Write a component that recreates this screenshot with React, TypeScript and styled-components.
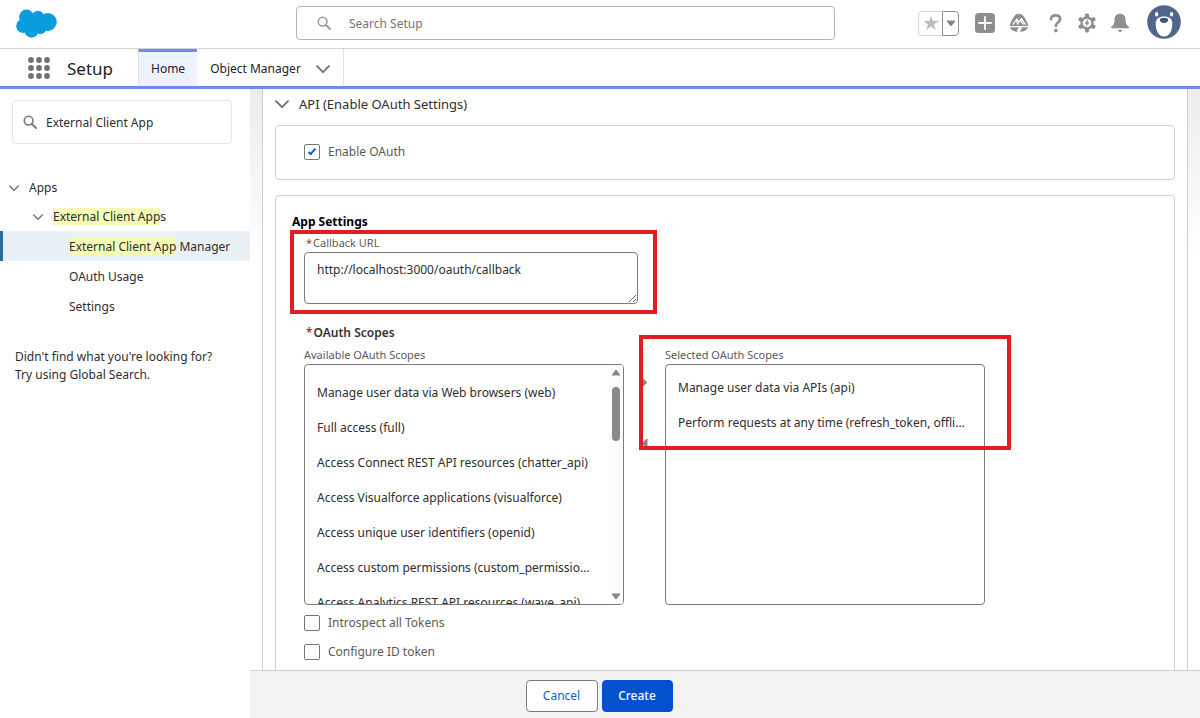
import React, { useState } from "react";
import styled, { createGlobalStyle, css } from "styled-components";

const GlobalStyle = createGlobalStyle`
  *, *::before, *::after { box-sizing: border-box; }
  body {
    margin: 0;
    background: #fff;
    color: #2e2e2e;
    font-family: "Noto Sans", "Open Sans", sans-serif;
    font-size: 12px;
    line-height: 18px;
  }
  button, input, textarea { font: inherit; color: inherit; }
  ul { list-style: none; margin: 0; padding: 0; }
  h1, h2, h3 { margin: 0; font-weight: 400; }
  svg { display: block; flex: none; }
`;

const Page = styled.div`
  display: flex;
  flex-direction: column;
  height: 100vh;
`;

/* ---------- global header ---------- */

const Header = styled.header`
  display: flex;
  align-items: center;
  flex: none;
  height: 49px;
  padding-right: 17px;
  padding-bottom: 2px;
  border-bottom: 1px solid #d4d4d4;
`;

const Brand = styled.a`
  flex: 0 0 296px;
  padding-left: 16px;
`;

const GlobalSearch = styled.label`
  display: flex;
  align-items: center;
  flex: 1;
  gap: 18px;
  height: 34px;
  margin-right: 83px;
  padding-left: 20px;
  border: 1px solid #b4b4b4;
  border-radius: 4px;
  color: #9a9a9a;
`;

const BareInput = styled.input`
  flex: 1;
  min-width: 0;
  padding: 2px 0 0;
  border: 0;
  outline: 0;
  background: none;
  &::placeholder { color: #757575; opacity: 1; }
`;

const Actions = styled.div`
  display: flex;
  align-items: center;
  gap: 14px;
`;

const SplitButton = styled.div`
  display: flex;
  margin-right: 2px;
`;

const SplitPart = styled.button<{ $strong?: boolean }>`
  display: grid;
  place-items: center;
  width: ${(p) => (p.$strong ? 17 : 24)}px;
  height: 25px;
  padding: 0;
  background: #fff;
  border: 1px solid ${(p) => (p.$strong ? "#8f8f8f" : "#d9d9d9")};
  border-radius: ${(p) => (p.$strong ? "0 4px 4px 0" : "4px 0 0 4px")};
  ${(p) => !p.$strong && css`border-right: 0;`}
`;

const IconButton = styled.button<{ $size?: number }>`
  display: grid;
  place-items: center;
  width: ${(p) => p.$size ?? 20}px;
  height: ${(p) => p.$size ?? 20}px;
  padding: 0;
  border: 0;
  background: none;
  color: #8e8e8e;
`;

/* ---------- navigation bar ---------- */

const NavBar = styled.nav`
  display: flex;
  align-items: stretch;
  flex: none;
  height: 40px;
  border-bottom: 3px solid #7389e9;
`;

const Launcher = styled.button`
  display: grid;
  place-items: center;
  width: 22px;
  margin: 0 17px 0 28px;
  padding: 0;
  border: 0;
  background: none;
`;

const AppName = styled.h1`
  width: 71px;
  font-size: 17px;
  line-height: 39px;
  color: #222;
`;

const Tab = styled.a<{ $active?: boolean }>`
  display: flex;
  align-items: center;
  gap: 15px;
  padding: 3px 13px 0;
  color: #222;
  text-decoration: none;
  border-right: 1px solid #e2e2e2;
  ${(p) =>
    p.$active &&
    css`
      padding: 0 12px;
      background: #eef1fe;
      border-top: 3px solid #7389e9;
      border-left: 1px solid #dfe1ec;
      border-right: 0;
    `}
`;

/* ---------- sidebar ---------- */

const Body = styled.div`
  display: flex;
  flex: 1;
  min-height: 0;
`;

const Sidebar = styled.aside`
  flex: 0 0 250px;
  padding-top: 11px;
`;

const QuickFind = styled.label`
  display: flex;
  align-items: center;
  gap: 9px;
  height: 44px;
  margin: 0 18px 29px 12px;
  padding-left: 10px;
  border: 1px solid #e4e4e4;
  border-radius: 4px;
  color: #747474;
  ${BareInput} { color: #2e2e2e; }
`;

const TreeItem = styled.a<{ $level: 0 | 1 | 2; $active?: boolean }>`
  display: flex;
  align-items: center;
  gap: 10px;
  height: ${(p) => (p.$level === 2 ? 30 : 29)}px;
  padding-top: ${(p) => (p.$level === 2 ? 2 : 0)}px;
  padding-left: ${(p) => [9, 33, 69][p.$level]}px;
  color: #2e2e2e;
  text-decoration: none;
  ${(p) =>
    p.$active &&
    css`
      background: #e9f0f6;
      box-shadow: inset 3px 0 #2b6c9c;
    `}
`;

const Match = styled.mark`
  color: inherit;
  background: #f5fbb4;
`;

const Hint = styled.p`
  margin: 27px 15px 0;
`;

/* ---------- main content ---------- */

const Main = styled.main`
  display: flex;
  flex-direction: column;
  flex: 1;
  min-width: 0;
  background: linear-gradient(#ececec, #fff 170px);
`;

const Sheet = styled.section`
  flex: 1;
  min-height: 0;
  overflow: hidden auto;
  scrollbar-width: none;
  margin: 0 12px;
  padding: 0 12px;
  background: #fff;
  border: solid #cfcfcf;
  border-width: 0 1px;
`;

const SectionTitle = styled.h2`
  display: flex;
  align-items: center;
  gap: 10px;
  height: 30px;
  margin-bottom: 6px;
  font-size: 13px;
`;

const Panel = styled.div`
  margin-bottom: 15px;
  padding: 17px 28px 18px;
  border: 1px solid #cfcfcf;
  border-radius: 4px;
`;

const PanelTitle = styled.h3`
  margin-left: -12px;
  font-size: 12px;
  font-weight: 700;
  color: #000;
`;

const Check = styled.label`
  display: flex;
  align-items: center;
  gap: 8px;
  color: #5a5a5a;
`;

const Box = styled.input`
  appearance: none;
  display: grid;
  place-items: center;
  width: 16px;
  height: 16px;
  margin: 0;
  background: #fff;
  border: 1px solid #757575;
  border-radius: 2px;
  &:checked::before {
    content: "";
    width: 8px;
    height: 4px;
    margin-bottom: 2px;
    border: solid #0b5cd5;
    border-width: 0 0 2px 2px;
    transform: rotate(-48deg);
  }
`;

const Caption = styled.label<{ $strong?: boolean }>`
  display: block;
  font-weight: ${(p) => (p.$strong ? 600 : 400)};
  color: ${(p) => (p.$strong ? "#333" : "#5a5a5a")};
  font-size: ${(p) => (p.$strong ? 12 : 11)}px;
`;

const Required = styled.span`
  margin: 0 1px 0 2px;
  color: #c8232c;
`;

const Field = styled.div`
  position: relative;
  width: 334px;
  margin: 3px 0 20px;
`;

const TextArea = styled.textarea`
  display: block;
  width: 100%;
  height: 52px;
  padding: 8px 12px;
  border: 1px solid #7c7c7c;
  border-radius: 4px;
  outline: 0;
  background: #fff;
  resize: vertical;
`;

/* Red rectangle laid over the fields it calls attention to. */
const Highlight = styled.div<{ $inset: string }>`
  position: absolute;
  inset: ${(p) => p.$inset};
  border: 4px solid #e21b25;
  pointer-events: none;
`;

const Duel = styled.div`
  display: flex;
  margin: 4px 0 9px;
`;

const Column = styled.div`
  position: relative;
  flex: 0 0 320px;
  min-width: 0;
`;

const ListBox = styled.div`
  display: flex;
  height: 241px;
  border: 1px solid #7c7c7c;
  border-radius: 4px;
  overflow: hidden;
`;

const Options = styled.ul<{ $top: number }>`
  flex: 1;
  min-width: 0;
  overflow: hidden;
  padding: ${(p) => p.$top}px 14px 0 12px;
`;

const Option = styled.li`
  line-height: 35px;
  white-space: nowrap;
  overflow: hidden;
  text-overflow: ellipsis;
`;

const ScrollTrack = styled.div`
  display: flex;
  flex-direction: column;
  align-items: center;
  width: 14px;
  padding: 4px 0;
  background: #fcfcfc;
`;

const ScrollThumb = styled.div`
  width: 8px;
  height: 54px;
  margin: 11px 0 auto;
  border-radius: 4px;
  background: #8a8a8a;
`;

const Movers = styled.div`
  display: flex;
  flex-direction: column;
  gap: 50px;
  flex: 0 0 41px;
  padding: 31px 0 0 17px;
`;

const Mover = styled.button`
  width: 8px;
  height: 11px;
  padding: 0;
  border: 0;
  background: none;
`;

const Checks = styled.div`
  display: flex;
  flex-direction: column;
  gap: 11px;
`;

const Footer = styled.footer`
  display: flex;
  justify-content: center;
  align-items: center;
  gap: 4px;
  flex: none;
  height: 48px;
  padding: 2px 252px 0 0;
  background: #f3f3f3;
  border-top: 1px solid #cdcdcd;
`;

const Button = styled.button<{ $primary?: boolean }>`
  width: ${(p) => (p.$primary ? 71 : 72)}px;
  height: 32px;
  padding: 0;
  border: 1px solid ${(p) => (p.$primary ? "#0350cc" : "#7c7c7c")};
  border-radius: 4px;
  background: ${(p) => (p.$primary ? "#0350cc" : "#fff")};
  color: ${(p) => (p.$primary ? "#fff" : "#0b62c9")};
  font-weight: ${(p) => (p.$primary ? 500 : 400)};
`;

/* ---------- drawings ---------- */

const SearchIcon = () => (
  <svg width="14" height="14" viewBox="0 0 14 14" fill="none" stroke="currentColor" strokeWidth="1.5">
    <circle cx="5.6" cy="5.6" r="4.4" />
    <path d="M8.9 8.9 13 13" strokeLinecap="round" strokeWidth="1.8" />
  </svg>
);

const Chevron = ({ size = 14, color = "#6e6e6e" }: { size?: number; color?: string }) => (
  <svg width={size} height={size} viewBox="0 0 14 14" fill="none" stroke={color} strokeWidth="1.8">
    <path d="M1 4.2 7 10.2 13 4.2" strokeLinecap="round" strokeLinejoin="round" />
  </svg>
);

const Triangle = ({ points, w, h }: { points: string; w: number; h: number }) => (
  <svg width={w} height={h} viewBox={`0 0 ${w} ${h}`} fill="#858585">
    <polygon points={points} stroke="#858585" strokeLinejoin="round" />
  </svg>
);

const Cloud = () => (
  <svg width="41" height="29" viewBox="0 0 41 29" fill="#0a9ddd">
    <circle cx="10.5" cy="8" r="7.4" />
    <circle cx="22" cy="8.2" r="6.4" />
    <circle cx="31.8" cy="13" r="9" />
    <circle cx="7.2" cy="17" r="7" />
    <circle cx="15.5" cy="21.5" r="7.2" />
    <circle cx="24.5" cy="19.5" r="5.6" />
    <path d="M8 8h18l4 10-14 6-9-6z" />
  </svg>
);

const Dots = () => (
  <svg width="22" height="22" viewBox="0 0 22 22" fill="#717171">
    {[3, 11, 19].map((y) => [3, 11, 19].map((x) => <circle key={`${x}-${y}`} cx={x} cy={y} r="2.9" />))}
  </svg>
);

const Star = () => (
  <svg width="16" height="16" viewBox="0 0 16 16" fill="#bcbcbc">
    <path d="M8 .6 9.9 6h5.6l-4.5 3.4 1.7 5.6L8 11.6 3.3 15 5 9.4.5 6h5.6z" />
  </svg>
);

const Plus = () => (
  <svg width="20" height="20" viewBox="0 0 20 20">
    <rect width="20" height="20" rx="3.5" fill="currentColor" />
    <path d="M10 4v12M4 10h12" stroke="#fff" strokeWidth="1.8" strokeLinecap="round" />
  </svg>
);

const Trail = () => (
  <svg width="20" height="20" viewBox="0 0 20 20" fill="currentColor">
    <path d="M10 .8c2 0 3.6.8 4.800 2.600 2 2.700 3.500 5.500 4.300 8.600.1.700-.1 1-.7 1H1.600c-.6 0-.8-.3-.7-1 .8-3.100 2.300-5.900 4.300-8.600C6.400 1.600 8 .8 10 .8z" />
    <path d="M1 14.200h7.500c1.600 0 1.600.9.5 1.500-1.100.7-1.100 1.700-.2 3C5 18.600 2 17.200 1 14.200zM12.400 14.200H19c-1 3-3.800 4.400-7.600 4.500-1.100-1.500 2.600-2.100 1-4.500z" />
    <path d="M3.800 11.600 7.900 6l2.200 3.300 2.300-3.700 4 6M7.900 6v3.500l1.800 2M12.400 5.600v3.300l2 2.500" fill="none" stroke="#fff" strokeWidth="1.200" strokeLinejoin="round" />
  </svg>
);

const Help = () => (
  <svg width="20" height="20" viewBox="0 0 20 20" fill="none" stroke="currentColor">
    <path d="M8 6.300C8 3.500 10 2.300 12.600 2.300c2.700 0 4.600 1.400 4.600 3.800 0 3.200-4.400 3.500-4.400 6.900" strokeWidth="2.700" strokeLinecap="round" />
    <circle cx="12.800" cy="17.600" r="1.800" fill="currentColor" stroke="none" />
  </svg>
);

const Gear = () => (
  <svg width="20" height="20" viewBox="0 0 20 20" fill="currentColor">
    {[0, 60, 120, 180, 240, 300].map((a) => (
      <rect key={a} x="8" y=".6" width="4" height="6" rx="1.300" transform={`rotate(${a} 10 10)`} />
    ))}
    <circle cx="10" cy="10" r="6.700" />
    <circle cx="10" cy="10" r="4.300" fill="#fff" />
    <path d="M10.900 6.200 7.500 10.700h2.100l-.8 3.200 3.700-4.700h-2.200l1.400-3z" />
  </svg>
);

const Bell = () => (
  <svg width="20" height="20" viewBox="0 0 20 20" fill="currentColor">
    <path d="M9 .8c3.300 0 5.600 2.400 5.600 5.800 0 3.700.7 5.100 1.900 6.200.9.800 1.600 1.100 1.600 1.700 0 .5-.3.700-.8.7H.8c-.5 0-.8-.2-.8-.7 0-.6.7-.9 1.600-1.700 1.200-1.100 1.900-2.500 1.900-6.200C3.500 3.200 5.700.8 9 .8zM6.900 16.700h4.200c0 1.200-.9 2.100-2.100 2.100s-2.100-.9-2.100-2.100z" />
  </svg>
);

const Avatar = () => (
  <svg width="34" height="36" viewBox="0 0 34 36">
    <circle cx="17" cy="17" r="16.800" fill="#50658c" />
    <ellipse cx="9.600" cy="9.300" rx="1.600" ry="2.200" fill="#fff" />
    <ellipse cx="24.600" cy="9.300" rx="1.600" ry="2.200" fill="#fff" />
    <path d="M17 11.500c5.200 0 8.300 2.200 8.300 7 0 7-2.800 13-8.300 13s-8.300-6-8.300-13c0-4.800 3.100-7 8.300-7z" fill="#fff" />
    <path d="M12.800 15c0-1.400 1.700-2.200 4.200-2.200s4.200.8 4.200 2.200c0 1.600-2.500 3.100-4.200 3.100s-4.200-1.500-4.200-3.100z" fill="#40557d" />
  </svg>
);

/* ---------- page ---------- */

const available = [
  "Manage user data via Web browsers (web)",
  "Full access (full)",
  "Access Connect REST API resources (chatter_api)",
  "Access Visualforce applications (visualforce)",
  "Access unique user identifiers (openid)",
  "Access custom permissions (custom_permissions)",
  "Access Analytics REST API resources (wave_api)",
];

const selected = [
  "Manage user data via APIs (api)",
  "Perform requests at any time (refresh_token, offline_access)",
];

export default function App() {
  const [term, setTerm] = useState("External Client App");
  const [url, setUrl] = useState("http://localhost:3000/oauth/callback");

  return (
    <Page>
      <GlobalStyle />
      <Header>
        <Brand href="#" aria-label="Salesforce"><Cloud /></Brand>
        <GlobalSearch>
          <SearchIcon />
          <BareInput placeholder="Search Setup" aria-label="Search Setup" />
        </GlobalSearch>
        <Actions>
          <SplitButton>
            <SplitPart aria-label="Add favorite"><Star /></SplitPart>
            <SplitPart $strong aria-label="Favorites list">
              <Triangle w={10} h={7} points="1,1 9,1 5,6" />
            </SplitPart>
          </SplitButton>
          <IconButton aria-label="Quick create"><Plus /></IconButton>
          <IconButton aria-label="Guidance"><Trail /></IconButton>
          <IconButton aria-label="Help"><Help /></IconButton>
          <IconButton aria-label="Setup menu"><Gear /></IconButton>
          <IconButton aria-label="Notifications"><Bell /></IconButton>
          <IconButton $size={38} aria-label="Profile"><Avatar /></IconButton>
        </Actions>
      </Header>

      <NavBar>
        <Launcher aria-label="App launcher"><Dots /></Launcher>
        <AppName>Setup</AppName>
        <Tab href="#" $active>Home</Tab>
        <Tab href="#">Object Manager <Chevron /></Tab>
      </NavBar>

      <Body>
        <Sidebar>
          <QuickFind>
            <SearchIcon />
            <BareInput value={term} onChange={(e) => setTerm(e.target.value)} aria-label="Quick Find" />
          </QuickFind>
          <TreeItem href="#" $level={0}><Chevron size={10} />Apps</TreeItem>
          <TreeItem href="#" $level={1}>
            <Chevron size={10} />
            <span><Match>External Client App</Match>s</span>
          </TreeItem>
          <TreeItem href="#" $level={2} $active>
            <span><Match>External Client App</Match> Manager</span>
          </TreeItem>
          <TreeItem href="#" $level={2}>OAuth Usage</TreeItem>
          <TreeItem href="#" $level={2}>Settings</TreeItem>
          <Hint>
            Didn't find what you're looking for?
            <br />
            Try using Global Search.
          </Hint>
        </Sidebar>

        <Main>
          <Sheet>
            <SectionTitle><Chevron />API (Enable OAuth Settings)</SectionTitle>
            <Panel>
              <Check><Box type="checkbox" defaultChecked />Enable OAuth</Check>
            </Panel>
            <Panel>
              <PanelTitle>App Settings</PanelTitle>
              <Field>
                <Caption htmlFor="callback"><Required>*</Required>Callback URL</Caption>
                <TextArea id="callback" value={url} onChange={(e) => setUrl(e.target.value)} />
                <Highlight $inset="-4px -19px -10px -14px" />
              </Field>
              <Caption as="div" $strong><Required>*</Required>OAuth Scopes</Caption>
              <Duel>
                <Column>
                  <Caption as="div" id="available">Available OAuth Scopes</Caption>
                  <ListBox>
                    <Options role="listbox" aria-labelledby="available" $top={10}>
                      {available.map((o) => <Option key={o} role="option">{o}</Option>)}
                    </Options>
                    <ScrollTrack>
                      <Triangle w={10} h={7} points="1,6 9,6 5,1" />
                      <ScrollThumb />
                      <Triangle w={10} h={7} points="1,1 9,1 5,6" />
                    </ScrollTrack>
                  </ListBox>
                </Column>
                <Movers>
                  <Mover aria-label="Add scope"><Triangle w={8} h={11} points="1,1 1,10 6,5.5" /></Mover>
                  <Mover aria-label="Remove scope"><Triangle w={8} h={11} points="6,1 6,10 1,5.5" /></Mover>
                </Movers>
                <Column>
                  <Caption as="div" id="selected">Selected OAuth Scopes</Caption>
                  <ListBox>
                    <Options role="listbox" aria-labelledby="selected" $top={5}>
                      {selected.map((o) => <Option key={o} role="option">{o}</Option>)}
                    </Options>
                  </ListBox>
                  <Highlight $inset="-11px -26px 155px -26px" />
                </Column>
              </Duel>
              <Checks>
                <Check><Box type="checkbox" />Introspect all Tokens</Check>
                <Check><Box type="checkbox" />Configure ID token</Check>
              </Checks>
            </Panel>
          </Sheet>
          <Footer>
            <Button>Cancel</Button>
            <Button $primary>Create</Button>
          </Footer>
        </Main>
      </Body>
    </Page>
  );
}
